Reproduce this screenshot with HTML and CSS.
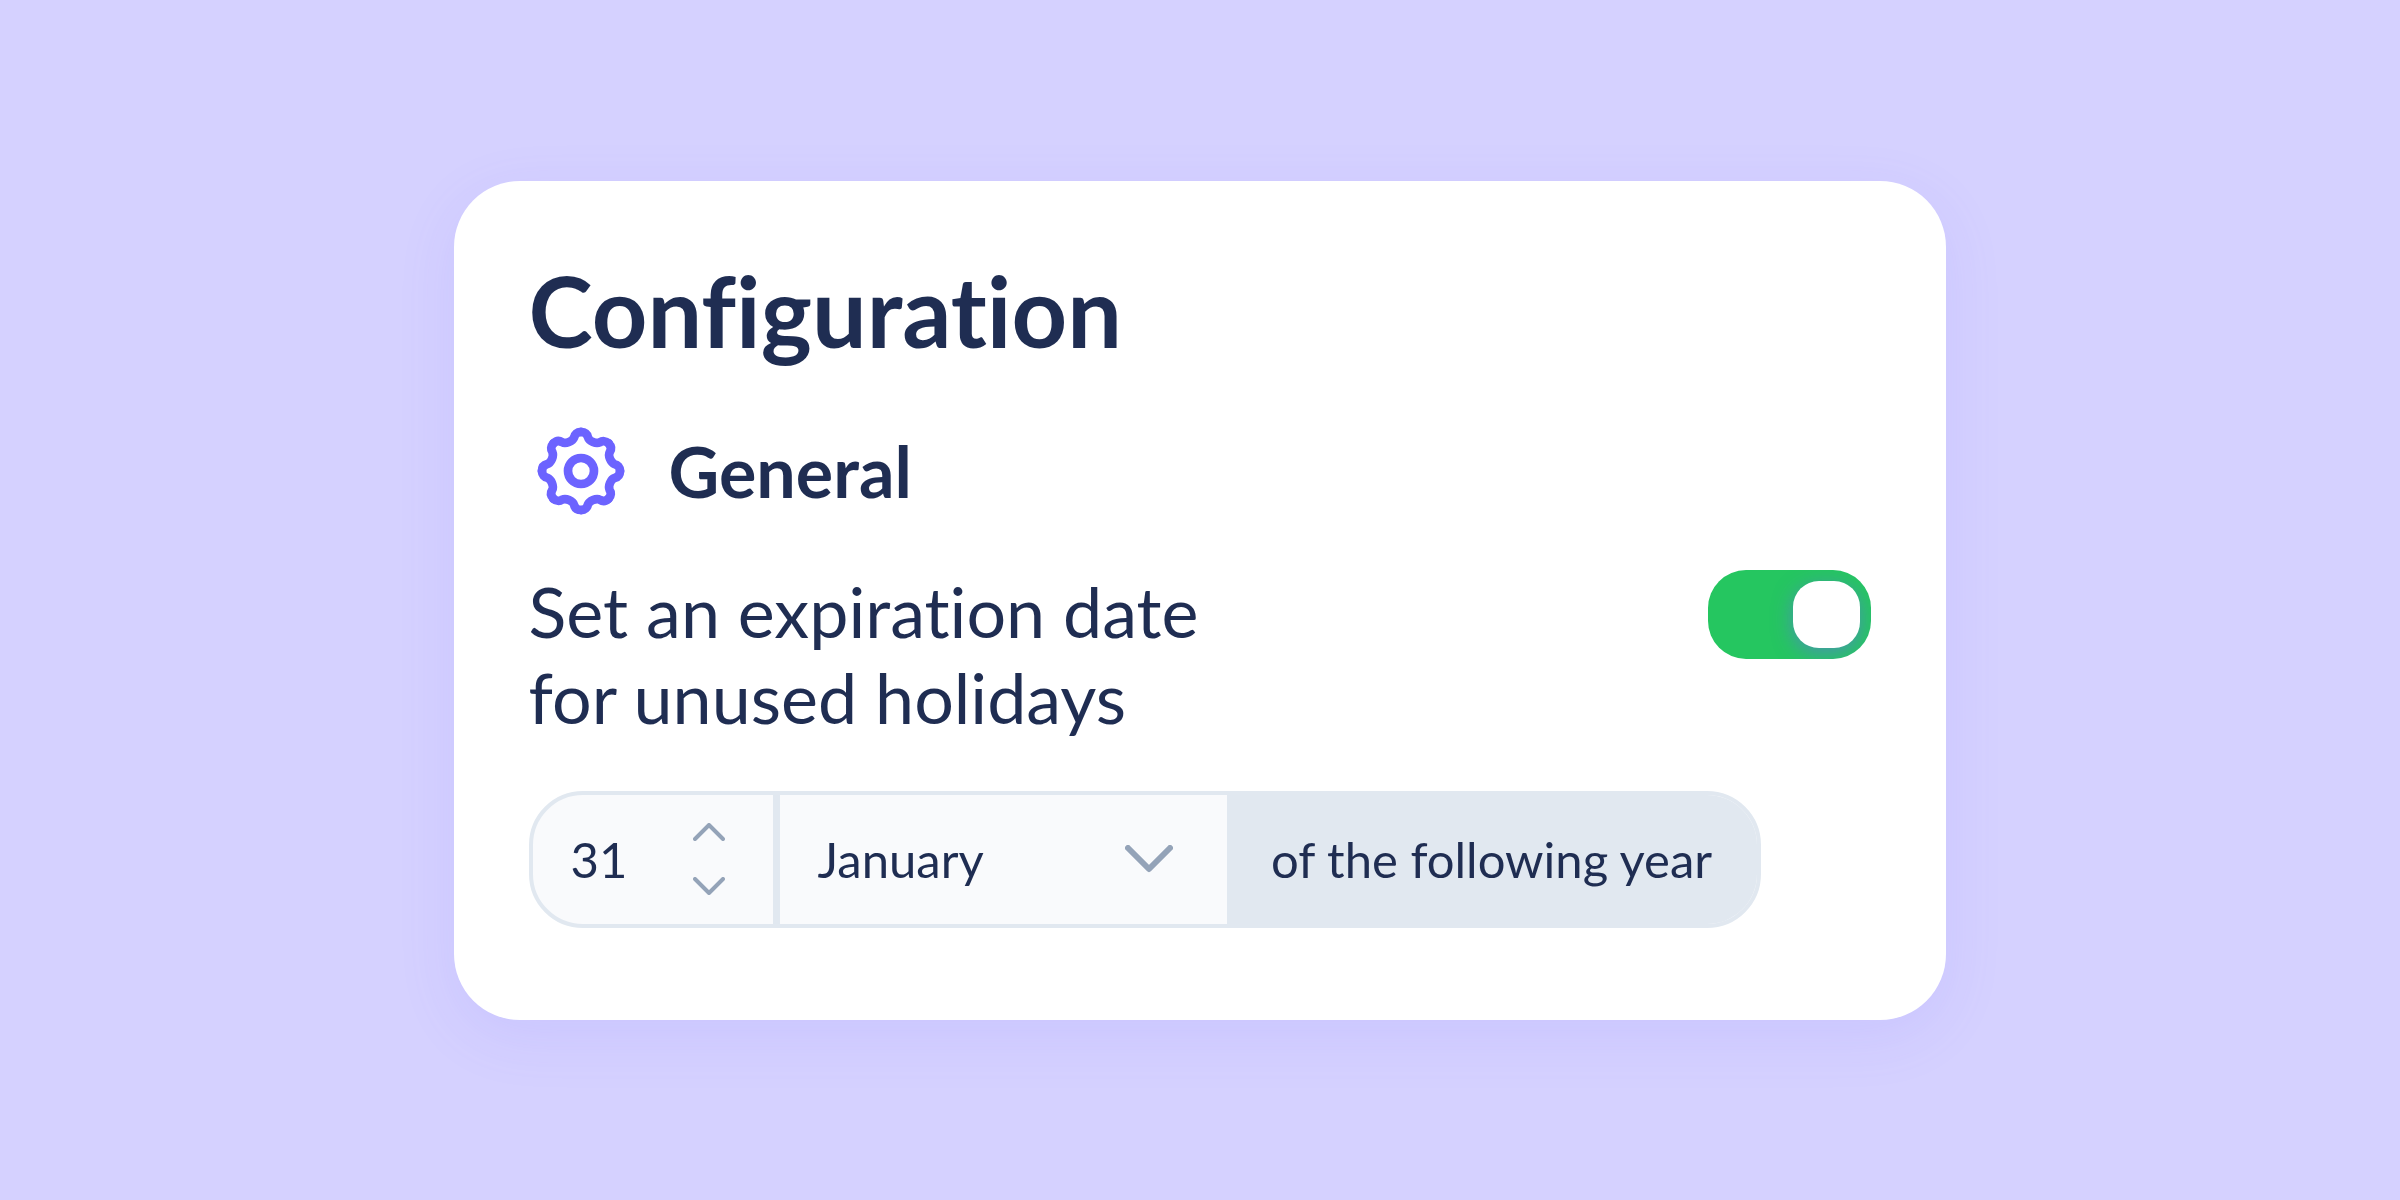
FILE: index.html
```html
<!DOCTYPE html>
<html lang="en">

<head>
  <meta charset="UTF-8">
  <meta name="viewport" content="width=device-width, initial-scale=1.0">
  <title>Configuration</title>
  <link rel="stylesheet" href="styles.css">
</head>

<body>
  <main class="card">
    <h1>Configuration</h1>

    <!-- Section heading -->
    <div class="section-title">
      <svg class="gear" viewBox="-156 -156 312 312" aria-hidden="true">
        <defs>
          <path id="tooth" d="M0 -117C12 -117 19 -110 21 -101C23 -94 29 -90 36 -87C43 -84 50 -83 57 -86C64 -91 74 -91 83 -83" />
        </defs>
        <use href="#tooth" />
        <use href="#tooth" transform="rotate(45)" />
        <use href="#tooth" transform="rotate(90)" />
        <use href="#tooth" transform="rotate(135)" />
        <use href="#tooth" transform="rotate(180)" />
        <use href="#tooth" transform="rotate(225)" />
        <use href="#tooth" transform="rotate(270)" />
        <use href="#tooth" transform="rotate(315)" />
        <circle r="39" />
      </svg>
      <h2>General</h2>
    </div>

    <!-- Expiration toggle -->
    <div class="setting">
      <label for="expiration">Set an expiration date<br>for unused holidays</label>
      <input type="checkbox" id="expiration" class="toggle" role="switch" checked>
    </div>

    <!-- Expiration date -->
    <div class="date-group">
      <div class="day">
        <input type="number" id="day" min="1" max="31" value="31" aria-label="Day">
        <div class="stepper">
          <button type="button" id="dayUp" aria-label="Next day">
            <svg viewBox="0 0 32 18" aria-hidden="true"><path d="M2 16L16 2L30 16" /></svg>
          </button>
          <button type="button" id="dayDown" aria-label="Previous day">
            <svg viewBox="0 0 32 18" aria-hidden="true"><path d="M2 2L16 16L30 2" /></svg>
          </button>
        </div>
      </div>
      <div class="month">
        <select id="month" aria-label="Month">
          <option selected>January</option>
          <option>February</option>
          <option>March</option>
          <option>April</option>
          <option>May</option>
          <option>June</option>
          <option>July</option>
          <option>August</option>
          <option>September</option>
          <option>October</option>
          <option>November</option>
          <option>December</option>
        </select>
        <svg viewBox="0 0 48 28" aria-hidden="true"><path d="M3 3L24 24L45 3" /></svg>
      </div>
      <span class="suffix">of the following year</span>
    </div>
  </main>

  <script>
    const day = document.getElementById('day');

    document.getElementById('dayUp').addEventListener('click', () => day.stepUp());
    document.getElementById('dayDown').addEventListener('click', () => day.stepDown());
  </script>
</body>

</html>
```
FILE: styles.css
```css
* {
  box-sizing: border-box;
}

body {
  margin: 0;
  min-height: 100vh;
  display: flex;
  justify-content: center;
  align-items: center;
  background: #d5d1ff;
  color: #1f2d52;
  font-family: Lato, 'Open Sans', sans-serif;
  font-variant-ligatures: none;
}

h1,
h2 {
  margin: 0;
}

/* Card */
.card {
  width: 62.2%;
  padding: 76px 75px 92px;
  background: #fff;
  border-radius: 66px;
  box-shadow: 0 16px 60px rgba(108, 99, 255, 0.11);
}

h1 {
  font-size: 97px;
  line-height: 108px;
  font-weight: 700;
}

.section-title {
  display: flex;
  align-items: center;
  gap: 36px;
  margin-top: 54px;
}

.section-title h2 {
  font-size: 70px;
  line-height: 86px;
  font-weight: 700;
}

.gear {
  width: 104px;
  height: 104px;
  fill: none;
  stroke: #6c63ff;
  stroke-width: 26;
  stroke-linecap: round;
}

/* Setting row */
.setting {
  display: flex;
  justify-content: space-between;
  align-items: flex-start;
  margin-top: 45px;
  font-size: 70px;
  line-height: 86px;
}

.toggle {
  appearance: none;
  flex: none;
  width: 163px;
  height: 89px;
  margin: 2px 0 0;
  padding: 11px;
  border-radius: 38px;
  background: #25c660;
  overflow: hidden;
  cursor: pointer;
}

.toggle::before {
  content: '';
  display: block;
  width: 67px;
  height: 67px;
  border-radius: 26px;
  background: #fff;
  box-shadow: 0 5px 20px rgba(108, 99, 255, 0.5);
}

.toggle:checked::before {
  margin-left: auto;
}

.toggle:not(:checked) {
  background: #94a3b8;
}

/* Date group */
.date-group {
  display: flex;
  max-width: 1232px;
  height: 137px;
  margin-top: 51px;
  border: 4px solid #e1e8f0;
  border-radius: 54px;
  background: #f9fafc;
  overflow: hidden;
  font-size: 49px;
}

.date-group input,
.date-group select {
  appearance: none;
  border: 0;
  margin: 0;
  background: transparent;
  color: inherit;
  font: inherit;
}

.day {
  display: flex;
  align-items: center;
  justify-content: space-between;
  width: 247px;
  padding: 0 48px 0 38px;
  border-right: 7px solid #e1e8f0;
}

.day input {
  width: 80px;
  padding: 0;
  appearance: textfield;
}

.stepper {
  display: flex;
  flex-direction: column;
  gap: 36px;
}

.stepper button {
  display: flex;
  padding: 0;
  border: 0;
  background: none;
  cursor: pointer;
}

.date-group svg {
  fill: none;
  stroke: #94a3b8;
  stroke-linecap: round;
  stroke-linejoin: round;
}

.stepper svg {
  width: 32px;
  height: 18px;
  stroke-width: 4;
}

.month {
  flex: 1;
  display: grid;
  align-items: center;
}

.month select,
.month svg {
  grid-area: 1 / 1;
}

.month select {
  width: 100%;
  height: 100%;
  padding: 0 112px 0 38px;
}

.month svg {
  justify-self: end;
  width: 48px;
  height: 28px;
  margin-right: 54px;
  stroke-width: 6;
  pointer-events: none;
}

.suffix {
  display: flex;
  align-items: center;
  justify-content: center;
  width: 530px;
  background: #e1e8f0;
}
```
